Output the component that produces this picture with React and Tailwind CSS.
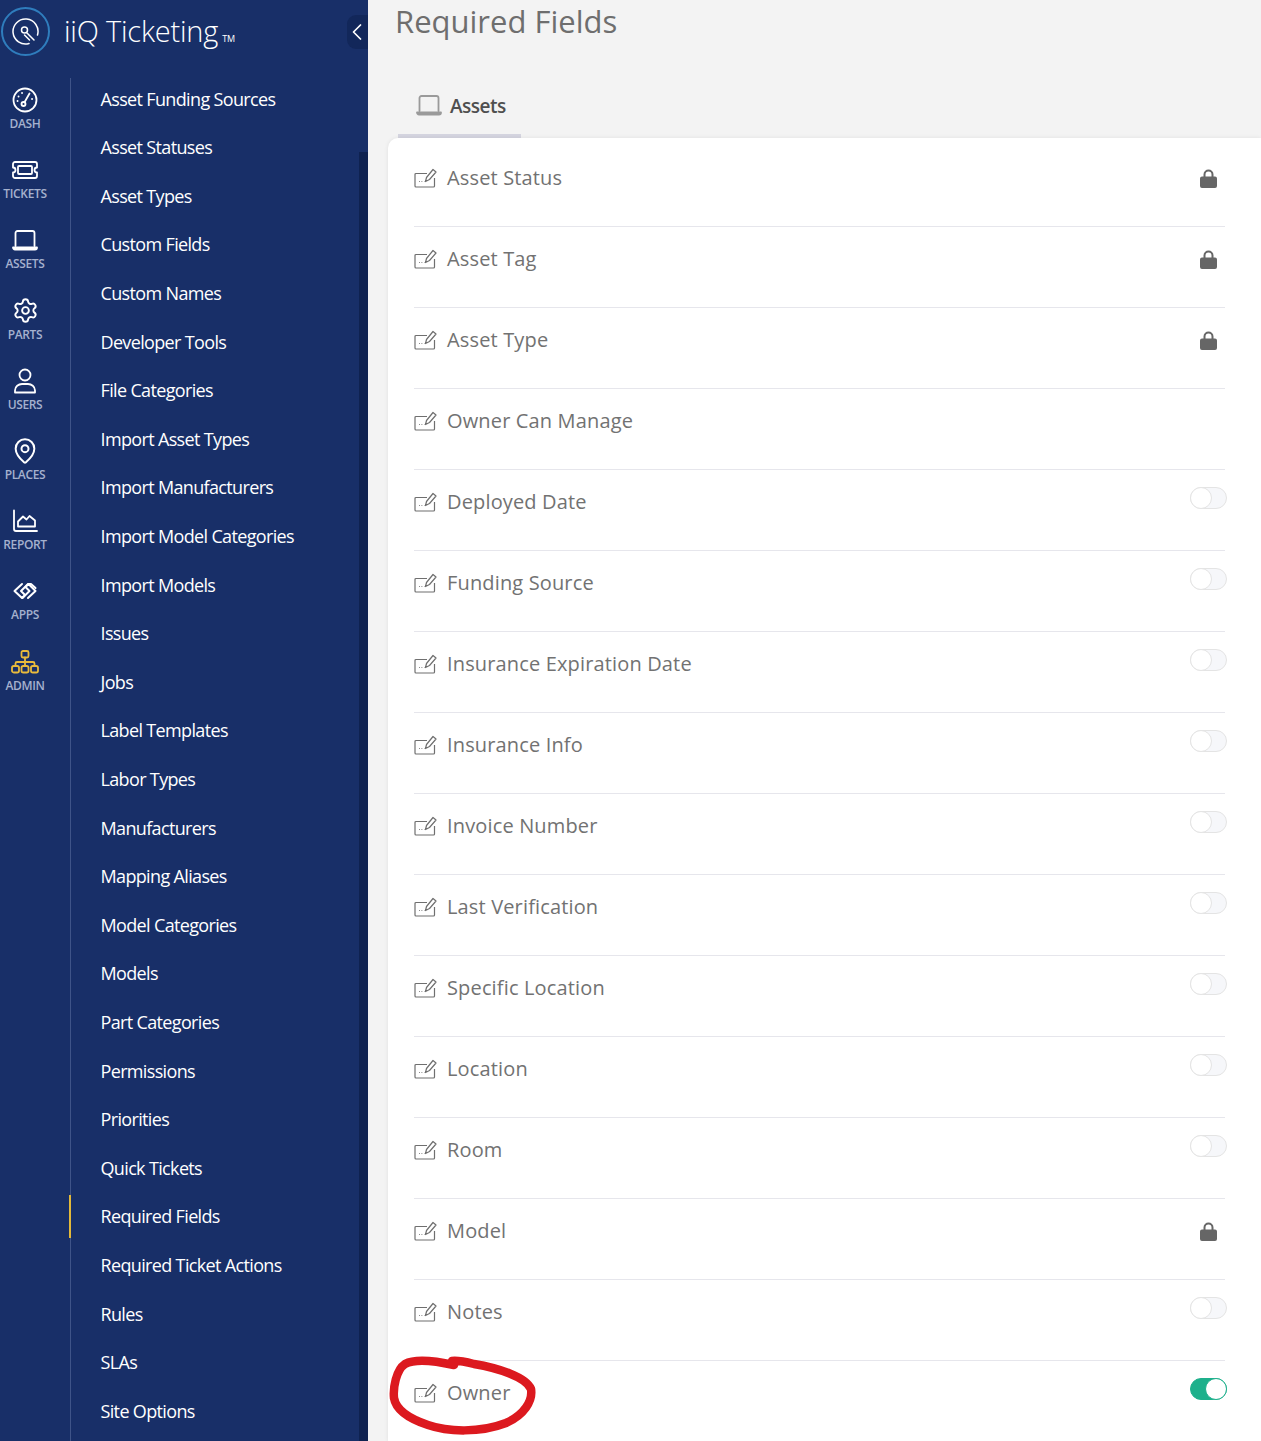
import { ChevronLeft, MapPin, Settings } from "lucide-react";

const railStroke = {
  fill: "none",
  stroke: "currentColor",
  strokeWidth: 1.8,
  strokeLinecap: "round",
  strokeLinejoin: "round",
};

const DashIcon = () => (
  <svg width="26" height="26" viewBox="0 0 26 26" {...railStroke}>
    <circle cx="13" cy="13" r="11.5" />
    <circle cx="11.5" cy="17" r="2" />
    <path d="M12.5 15.2 17.5 6.5" />
    <path d="M6.5 9.5h.1M10 6h.1M5.5 14h.1M20 12h.1" />
  </svg>
);

const TicketIcon = () => (
  <svg width="28" height="20" viewBox="0 0 28 20" {...railStroke}>
    <path d="M4 2h20a2 2 0 0 1 2 2v3.500a2.500 2.500 0 0 0 0 5V16a2 2 0 0 1-2 2H4a2 2 0 0 1-2-2v-3.500a2.500 2.500 0 0 0 0-5V4a2 2 0 0 1 2-2z" />
    <rect x="7" y="6" width="14" height="8" rx="1" />
  </svg>
);

const LaptopIcon = ({ size = 26 }) => (
  <svg width={size} height={size * 0.81} viewBox="0 0 26 21" {...railStroke}>
    <path d="M3.5 16V3a2 2 0 0 1 2-2h15a2 2 0 0 1 2 2v13" />
    <path d="M1 17.5h24a2 2 0 0 1-2 2H3a2 2 0 0 1-2-2z" />
  </svg>
);

const UserIcon = () => (
  <svg width="24" height="26" viewBox="0 0 24 26" {...railStroke}>
    <circle cx="12" cy="7" r="5.5" />
    <path d="M2 24.5v-2c0-4 3.500-6.500 7-6.500h6c3.500 0 7 2.500 7 6.500v2z" />
  </svg>
);

const ReportIcon = () => (
  <svg width="26" height="24" viewBox="0 0 26 24" {...railStroke}>
    <path d="M2 1.500V20a2 2 0 0 0 2 2h21" />
    <path d="M6 17.500v-5l5-5 3.500 3 3-3.500 5.500 4.500v6z" />
  </svg>
);

const AppsIcon = () => (
  <svg width="26" height="20" viewBox="0 0 26 20" {...railStroke} strokeWidth="2">
    <path d="M10 3 2.500 10l7.500 7 3-3-4-4 7-7 3-0 4.500 4" />
    <path d="M16 17l7.500-7L16.500 3l-3 3 4 4-7 7" />
  </svg>
);

const AdminIcon = () => (
  <svg width="28" height="24" viewBox="0 0 28 24" {...railStroke}>
    <rect x="10.500" y="1" width="7" height="6.500" rx="1.500" />
    <path d="M14 7.500v8M4.500 16v-2.500a1.500 1.500 0 0 1 1.500-1.500h16a1.500 1.500 0 0 1 1.500 1.500V16" />
    <rect x="1" y="16" width="7" height="6.500" rx="1.800" />
    <rect x="10.500" y="16" width="7" height="6.500" rx="1.800" />
    <rect x="20" y="16" width="7" height="6.500" rx="1.800" />
  </svg>
);

const EditIcon = () => (
  <svg width="23" height="20" viewBox="0 0 23 20" fill="none" stroke="#6f6f6f" strokeWidth="1.200" strokeLinejoin="round">
    <path d="M13 5.500H2a1 1 0 0 0-1 1V18a1 1 0 0 0 1 1h17.500a1 1 0 0 0 1-1V10" />
    <path d="M11.500 13.500 12.500 9.500 19 1.500 22 4l-6.500 7.500z" />
    <path d="M5 13.500h.8M7.500 13.500h.8M10 13.500h.4" />
  </svg>
);

const LockIcon = () => (
  <svg width="17" height="19" viewBox="0 0 17 19">
    <path fill="#666" d="M2 7.500h1.500V5.500a5 5 0 0 1 10 0v2H15a2 2 0 0 1 2 2V17a2 2 0 0 1-2 2H2a2 2 0 0 1-2-2V9.500a2 2 0 0 1 2-2zm3.500 0h6v-2a3 3 0 0 0-6 0z" />
  </svg>
);

const railItems = [
  { label: "DASH", icon: <DashIcon /> },
  { label: "TICKETS", icon: <TicketIcon /> },
  { label: "ASSETS", icon: <LaptopIcon /> },
  { label: "PARTS", icon: <Settings size={27} strokeWidth={1.7} /> },
  { label: "USERS", icon: <UserIcon /> },
  { label: "PLACES", icon: <MapPin size={28} strokeWidth={1.7} /> },
  { label: "REPORT", icon: <ReportIcon /> },
  { label: "APPS", icon: <AppsIcon /> },
  { label: "ADMIN", icon: <AdminIcon />, active: true },
];

const menuItems = [
  "Asset Funding Sources",
  "Asset Statuses",
  "Asset Types",
  "Custom Fields",
  "Custom Names",
  "Developer Tools",
  "File Categories",
  "Import Asset Types",
  "Import Manufacturers",
  "Import Model Categories",
  "Import Models",
  "Issues",
  "Jobs",
  "Label Templates",
  "Labor Types",
  "Manufacturers",
  "Mapping Aliases",
  "Model Categories",
  "Models",
  "Part Categories",
  "Permissions",
  "Priorities",
  "Quick Tickets",
  "Required Fields",
  "Required Ticket Actions",
  "Rules",
  "SLAs",
  "Site Options",
];

const fields = [
  { name: "Asset Status", state: "lock" },
  { name: "Asset Tag", state: "lock" },
  { name: "Asset Type", state: "lock" },
  { name: "Owner Can Manage" },
  { name: "Deployed Date", state: "off" },
  { name: "Funding Source", state: "off" },
  { name: "Insurance Expiration Date", state: "off" },
  { name: "Insurance Info", state: "off" },
  { name: "Invoice Number", state: "off" },
  { name: "Last Verification", state: "off" },
  { name: "Specific Location", state: "off" },
  { name: "Location", state: "off" },
  { name: "Room", state: "off" },
  { name: "Model", state: "lock" },
  { name: "Notes", state: "off" },
  { name: "Owner", state: "on" },
];

const Toggle = ({ on }) => (
  <div
    className={`relative mt-[17px] -mr-[2px] h-[22px] w-[37px] rounded-full border ${
      on ? "border-[#1eb08c] bg-[#1eb08c]" : "border-[#e4e4e4] bg-[#f6f7fa]"
    }`}
  >
    <div
      className={`absolute top-[-1px] h-[22px] w-[22px] rounded-full border bg-white ${
        on ? "right-[-1px] border-[#1eb08c]" : "left-[-1px] border-[#e4e4e4]"
      }`}
    />
  </div>
);

const FieldRow = ({ name, state }) => (
  <div className="flex h-[81px] justify-between border-b border-[#e6e6ec] last:h-[80px]">
    <div className="mt-[18px] flex h-[28px] items-center gap-[10px] text-[20px] tracking-[0.15px] text-[#727272]">
      <EditIcon />
      <span>{name}</span>
    </div>
    {state === "lock" && (
      <div className="mr-[8px] mt-[23px]">
        <LockIcon />
      </div>
    )}
    {state === "off" && <Toggle />}
    {state === "on" && <Toggle on />}
  </div>
);

const App = () => {
  return (
    <div className="flex h-[1441px] w-[1261px] overflow-hidden bg-[#f3f3f3] font-['Open_Sans',sans-serif]">
      <aside className="relative flex w-[368px] shrink-0 flex-col bg-[#182f68] text-white">
        <header className="flex h-[78px] shrink-0 items-start pl-[1px] pt-[7px]">
          <div className="relative h-[49px] w-[49px] rounded-full border-2 border-[#2f7dbd]">
            <svg className="absolute left-[9px] top-[9px]" width="27" height="27" viewBox="0 0 27 27" fill="none" stroke="white" strokeWidth="1.500" strokeLinecap="round">
              <path d="M17 25.500A12.500 12.500 0 1 1 25.500 17" />
              <circle cx="12.500" cy="12" r="3" />
              <path d="M14.500 14.500 22 22M12.500 17l5 5" />
            </svg>
          </div>
          <div className="ml-[14px] flex items-baseline text-[29px] leading-[47px] font-light tracking-[-0.2px]">
            iiQ Ticketing
            <span className="ml-[4px] text-[9px] font-normal">TM</span>
          </div>
        </header>
        <div className="absolute right-0 top-[15px] flex h-[34px] w-[21px] items-center justify-center rounded-l-[9px] bg-[#12275a] pr-[2px]">
          <ChevronLeft className="shrink-0" size={28} strokeWidth={1.5} />
        </div>
        <div className="flex min-h-0 flex-1">
          <nav className="flex w-[70px] shrink-0 flex-col pr-[20px] pt-[9px]">
            {railItems.map((item) => (
              <div key={item.label} className="flex h-[70.2px] w-full shrink-0 flex-col items-center">
                <div className={`flex h-[26px] items-center justify-center ${item.active ? "text-[#e9bb3c]" : "text-white"}`}>
                  {item.icon}
                </div>
                <span className="mt-[2px] whitespace-nowrap text-[12px] leading-[18px] font-semibold tracking-[-0.35px] text-[#a5b1ce]">
                  {item.label}
                </span>
              </div>
            ))}
          </nav>
          <div className="min-w-0 flex-1 border-l border-[#3f5488]">
            <div className="-mt-[3.1px] flex flex-col">
              {menuItems.map((item) => (
                <div
                  key={item}
                  className={`relative flex h-[48.6px] shrink-0 items-center pl-[29.5px] text-[18px] tracking-[-0.65px] ${
                    item === "Required Fields" ? "before:absolute before:left-[-2px] before:top-[2px] before:h-[43px] before:w-[2px] before:bg-[#e3b93a]" : ""
                  }`}
                >
                  {item}
                </div>
              ))}
            </div>
          </div>
          <div className="mt-[74px] w-[9px] shrink-0 bg-[#0f2250]" />
        </div>
      </aside>

      <main className="min-w-0 flex-1 pl-[20px]">
        <h1 className="ml-[8px] -translate-x-[1px] h-[95px] text-[31px] leading-[43px] text-[#6e6e6e]">Required Fields</h1>
        <div className="ml-[10px] h-[43px] w-[123px] border-b-[4px] border-[#d5d5e0]">
          <div className="flex items-center gap-[8px] pl-[18px] text-[#9a9a9a]">
            <LaptopIcon size={26} />
            <span className="text-[19px] leading-[8px] font-semibold tracking-[-0.5px] text-[#4f4f4f]">Assets</span>
          </div>
        </div>
        <div className="relative rounded-tl-[10px] bg-white pl-[26px] pr-[36px] pt-[8px] shadow-[0_0_4px_rgba(0,0,0,0.08)]">
          {fields.map((field) => (
            <FieldRow key={field.name} name={field.name} state={field.state} />
          ))}
          {/* hand drawn circle around the Owner row */}
          <svg className="pointer-events-none absolute left-0 top-[1215px]" width="160" height="90" viewBox="0 0 160 90" fill="none" stroke="#dc191f" strokeWidth="8.500" strokeLinecap="round" strokeLinejoin="round">
            <path d="M66 12C48 8 28 5 17 11 8 17 5 35 6 45 8 57 22 66 40 72 60 79 92 80 118 70 136 62 145 48 143 36 138 24 110 15 86 11 78 9 70 7 64 8" />
          </svg>
        </div>
      </main>
    </div>
  );
};

export default App;
